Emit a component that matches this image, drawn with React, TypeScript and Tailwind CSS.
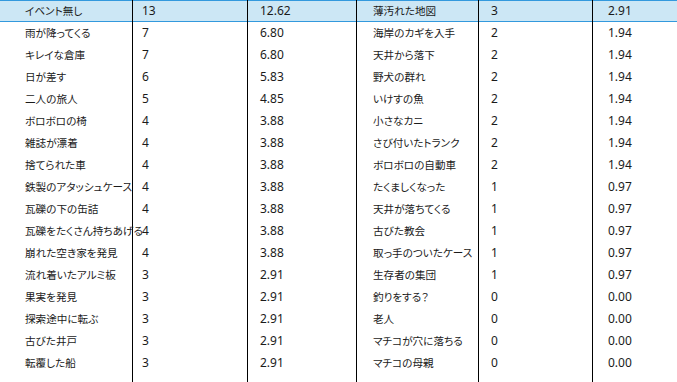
import React from "react";

type Row = [string, number, string];

const left: Row[] = [
  ["イベント無し", 13, "12.62"],
  ["雨が降ってくる", 7, "6.80"],
  ["キレイな倉庫", 7, "6.80"],
  ["日が差す", 6, "5.83"],
  ["二人の旅人", 5, "4.85"],
  ["ボロボロの椅", 4, "3.88"],
  ["雑誌が漂着", 4, "3.88"],
  ["捨てられた車", 4, "3.88"],
  ["鉄製のアタッシュケース", 4, "3.88"],
  ["瓦礫の下の缶詰", 4, "3.88"],
  ["瓦礫をたくさん持ちあげる", 4, "3.88"],
  ["崩れた空き家を発見", 4, "3.88"],
  ["流れ着いたアルミ板", 3, "2.91"],
  ["果実を発見", 3, "2.91"],
  ["探索途中に転ぶ", 3, "2.91"],
  ["古びた井戸", 3, "2.91"],
  ["転覆した船", 3, "2.91"],
];

const right: Row[] = [
  ["薄汚れた地図", 3, "2.91"],
  ["海岸のカギを入手", 2, "1.94"],
  ["天井から落下", 2, "1.94"],
  ["野犬の群れ", 2, "1.94"],
  ["いけすの魚", 2, "1.94"],
  ["小さなカニ", 2, "1.94"],
  ["さび付いたトランク", 2, "1.94"],
  ["ボロボロの自動車", 2, "1.94"],
  ["たくましくなった", 1, "0.97"],
  ["天井が落ちてくる", 1, "0.97"],
  ["古びた教会", 1, "0.97"],
  ["取っ手のついたケース", 1, "0.97"],
  ["生存者の集団", 1, "0.97"],
  ["釣りをする？", 0, "0.00"],
  ["老人", 0, "0.00"],
  ["マチコが穴に落ちる", 0, "0.00"],
  ["マチコの母親", 0, "0.00"],
];

const grid = "grid grid-cols-[133px_115px_109px_122px_114px_1fr]";
const jp =
  "text-[10.6px] [font-feature-settings:'palt'] font-['Meiryo_UI','Noto_Sans_CJK_JP',sans-serif]";
const num = "text-[12px] font-['Segoe_UI','Noto_Sans','Noto_Sans_CJK_JP',sans-serif]";

export default function App() {
  return (
    <div className="w-[677px] h-[382px] bg-white text-[#1b1b1b] flex flex-col overflow-hidden">
      {left.map((l, i) => {
        const r = right[i];
        const selected = i === 0;
        return (
          <div
            key={i}
            className={`${grid} h-[22px] shrink-0 leading-[22px] ${
              selected
                ? "bg-[#cce7f5] shadow-[inset_0_1px_0_#3399dd,inset_0_-1px_0_#3399dd]"
                : ""
            }`}
          >
            <div className={`${jp} pl-[25px] border-r border-black whitespace-nowrap relative z-10`}>
              {l[0]}
            </div>
            <div className={`${num} pl-[9px] border-r border-black`}>{l[1]}</div>
            <div className={`${num} pl-[12px] border-r border-black`}>{l[2]}</div>
            <div className={`${jp} pl-[16px] border-r border-black whitespace-nowrap`}>
              {r[0]}
            </div>
            <div className={`${num} pl-[12px] border-r border-black`}>{r[1]}</div>
            <div className={`${num} pl-[15px]`}>{r[2]}</div>
          </div>
        );
      })}
      <div className={`${grid} flex-1`}>
        <div className="border-r border-black" />
        <div className="border-r border-black" />
        <div className="border-r border-black" />
        <div className="border-r border-black" />
        <div className="border-r border-black" />
        <div />
      </div>
    </div>
  );
}
